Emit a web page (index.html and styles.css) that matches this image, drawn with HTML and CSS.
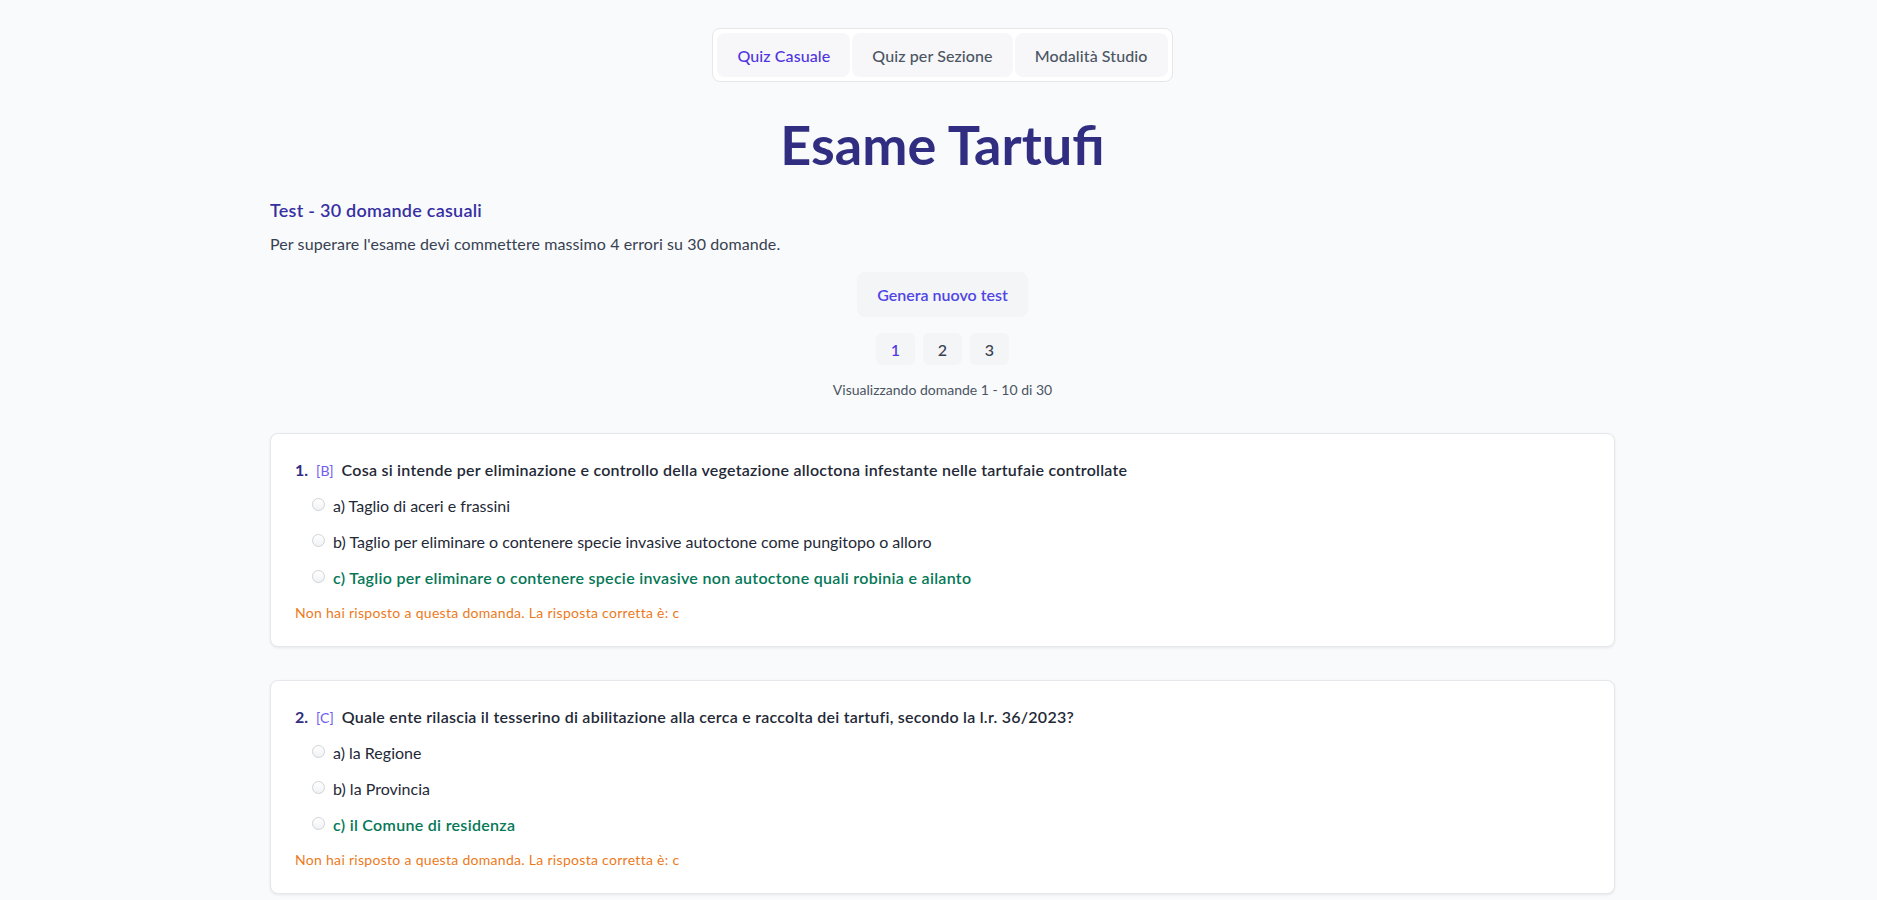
FILE: index.html
```html
<!DOCTYPE html>
<html lang="it">
<head>
<meta charset="utf-8">
<title>Esame Tartufi</title>
<link rel="stylesheet" href="styles.css">
</head>
<body>
<div class="page">
  <nav class="tabs-wrap">
    <div class="tabs">
      <button class="tab active">Quiz Casuale</button>
      <button class="tab">Quiz per Sezione</button>
      <button class="tab">Modalità Studio</button>
    </div>
  </nav>

  <h1 class="title">Esame Tartufi</h1>

  <h2 class="subtitle">Test - 30 domande casuali</h2>
  <p class="intro">Per superare l'esame devi commettere massimo 4 errori su 30 domande.</p>

  <div class="actions">
    <button class="gen-btn">Genera nuovo test</button>
  </div>

  <div class="pager">
    <button class="page-btn current">1</button>
    <button class="page-btn">2</button>
    <button class="page-btn">3</button>
  </div>
  <p class="range">Visualizzando domande 1 - 10 di 30</p>

  <div class="questions">
    <section class="card">
      <div class="q">
        <span class="q-num">1.</span>
        <span class="q-sec">[B]</span>
        <span class="q-text">Cosa si intende per eliminazione e controllo della vegetazione alloctona infestante nelle tartufaie controllate</span>
      </div>
      <ul class="opts">
        <li class="opt"><span class="radio"></span><span>a) Taglio di aceri e frassini</span></li>
        <li class="opt"><span class="radio"></span><span>b) Taglio per eliminare o contenere specie invasive autoctone come pungitopo o alloro</span></li>
        <li class="opt correct"><span class="radio"></span><span>c) Taglio per eliminare o contenere specie invasive non autoctone quali robinia e ailanto</span></li>
      </ul>
      <p class="msg">Non hai risposto a questa domanda. La risposta corretta è: c</p>
    </section>

    <section class="card">
      <div class="q">
        <span class="q-num">2.</span>
        <span class="q-sec">[C]</span>
        <span class="q-text">Quale ente rilascia il tesserino di abilitazione alla cerca e raccolta dei tartufi, secondo la l.r. 36/2023?</span>
      </div>
      <ul class="opts">
        <li class="opt"><span class="radio"></span><span>a) la Regione</span></li>
        <li class="opt"><span class="radio"></span><span>b) la Provincia</span></li>
        <li class="opt correct"><span class="radio"></span><span>c) il Comune di residenza</span></li>
      </ul>
      <p class="msg">Non hai risposto a questa domanda. La risposta corretta è: c</p>
    </section>

    <section class="card">
      <div class="q">
        <span class="q-num">3.</span>
        <span class="q-sec">[A]</span>
        <span class="q-text">Quale delle seguenti specie di tartufo è commercializzabile?</span>
      </div>
      <ul class="opts">
        <li class="opt"><span class="radio"></span><span>a) Tuber magnatum Pico</span></li>
        <li class="opt"><span class="radio"></span><span>b) Tuber aestivum Vitt.</span></li>
        <li class="opt correct"><span class="radio"></span><span>c) entrambe</span></li>
      </ul>
      <p class="msg">Non hai risposto a questa domanda. La risposta corretta è: c</p>
    </section>
  </div>
</div>
</body>
</html>
```

FILE: styles.css
```css
* { box-sizing: border-box; }

html, body {
  background: #f9fafb;
}

body {
  margin: 0;
  padding: 0 0 40px 8px;
  font-family: Lato, "Liberation Sans", Arial, sans-serif;
  font-size: 16px;
  color: #1f2937;
}

.page {
  width: 1345px;
  margin: 0 auto;
  padding-top: 28px;
}

button {
  font-family: inherit;
  border: none;
  cursor: pointer;
}

.tabs-wrap {
  display: flex;
  justify-content: center;
}

.tabs {
  display: flex;
  gap: 2px;
  padding: 4px;
  background: #ffffff;
  border: 1px solid #e5e7eb;
  border-radius: 8px;
}

.tab {
  height: 44px;
  padding: 0 20px;
  background: #f7f7f9;
  border-radius: 8px;
  font-size: 16px;
  font-weight: 500;
  letter-spacing: 0.1px;
  color: #4b5563;
}

.tab.active {
  color: #4f35e0;
}

.title {
  margin: 32px 0 0;
  text-align: center;
  font-size: 54px;
  line-height: 62px;
  font-weight: 700;
  color: #312e81;
}

.subtitle {
  margin: 20px 0 0;
  font-size: 18px;
  line-height: 28px;
  font-weight: 600;
  letter-spacing: 0.25px;
  color: #3730a3;
}

.intro {
  margin: 8px 0 0;
  font-size: 16px;
  line-height: 24px;
  letter-spacing: 0.1px;
  color: #374151;
}

.actions {
  display: flex;
  justify-content: center;
  margin-top: 16px;
}

.gen-btn {
  height: 45px;
  padding: 0 20px;
  background: #f4f5f7;
  border-radius: 8px;
  font-size: 16px;
  font-weight: 600;
  color: #4f46e5;
}

.pager {
  display: flex;
  justify-content: center;
  gap: 8px;
  margin-top: 16px;
}

.page-btn {
  width: 39px;
  height: 32px;
  background: #f4f5f7;
  border-radius: 6px;
  font-size: 16px;
  font-weight: 500;
  color: #374151;
}

.page-btn.current {
  color: #4f35e0;
}

.range {
  margin: 15px 0 0;
  text-align: center;
  font-size: 14px;
  line-height: 20px;
  color: #4b5563;
}

.questions {
  display: flex;
  flex-direction: column;
  gap: 33px;
  margin-top: 33px;
}

.card {
  background: #ffffff;
  border: 1px solid #e5e7eb;
  border-radius: 8px;
  box-shadow: 0 1px 3px rgba(0, 0, 0, 0.08);
  padding: 24px 24px 23px;
}

.q {
  display: flex;
  align-items: baseline;
  line-height: 24px;
}

.q-num {
  font-size: 16px;
  font-weight: 700;
  color: #312e81;
}

.q-sec {
  margin: 0 8px 0 8px;
  font-size: 14px;
  color: #6d5cf0;
}

.q-text {
  font-size: 16px;
  font-weight: 600;
  letter-spacing: 0.25px;
  color: #1f2937;
}

.opts {
  list-style: none;
  margin: 11px 0 0;
  padding: 0 0 0 17px;
  display: flex;
  flex-direction: column;
  gap: 12px;
}

.opt {
  display: flex;
  align-items: center;
  gap: 8px;
  font-size: 16px;
  line-height: 24px;
  color: #1f2937;
}

.opt.correct {
  font-weight: 600;
  letter-spacing: 0.3px;
  color: #047857;
}

.radio {
  width: 13px;
  height: 13px;
  border-radius: 50%;
  border: 1px solid #cfd3d8;
  background: linear-gradient(#ffffff, #f1f2f4);
  margin-top: -3px;
  flex: none;
}

.msg {
  margin: 13px 0 0;
  font-size: 14px;
  line-height: 20px;
  letter-spacing: 0.3px;
  color: #ec7a1c;
}
```
